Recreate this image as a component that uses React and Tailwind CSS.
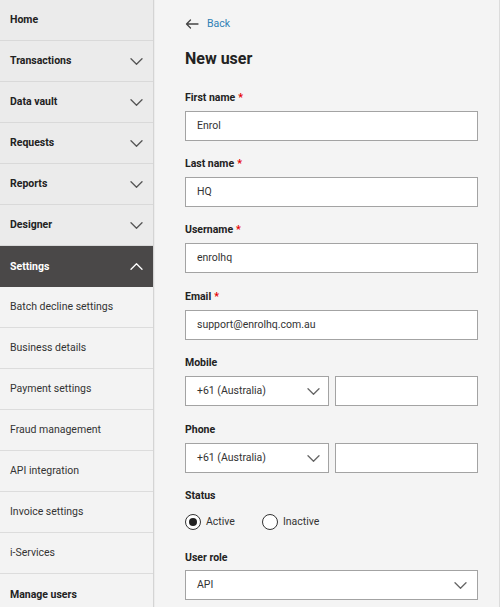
import React from "react";

const Chevron = ({ up = false, color = "#555" }) => (
  <svg width="13" height="7" viewBox="0 0 13 7" fill="none" className="shrink-0">
    <path
      d={up ? "M1 6.3 L6.5 0.8 L12 6.3" : "M1 0.7 L6.5 6.2 L12 0.7"}
      stroke={color}
      strokeWidth="1.3"
      strokeLinecap="round"
      strokeLinejoin="round"
    />
  </svg>
);

const top = [
  { label: "Home" },
  { label: "Transactions", chev: true },
  { label: "Data vault", chev: true },
  { label: "Requests", chev: true },
  { label: "Reports", chev: true },
  { label: "Designer", chev: true },
];

const subs = [
  "Batch decline settings",
  "Business details",
  "Payment settings",
  "Fraud management",
  "API integration",
  "Invoice settings",
  "i-Services",
];

function Field({ label, required, value, mb = "mb-[16px]" }) {
  return (
    <div className={`flex flex-col ${mb}`}>
      <div className="h-[14px] leading-[14px] text-[10.5px] font-bold text-[#222] mb-[6px]">
        {label}
        {required && <span className="text-[#e60000] ml-[3px]">*</span>}
      </div>
      <div className="h-[30px] w-[293px] bg-white border border-[#a3a3a3] flex items-center px-[11px] text-[10.5px] text-[#333]">
        {value}
      </div>
    </div>
  );
}

function PhoneField({ label, mb = "mb-[16px]" }) {
  return (
    <div className={`flex flex-col ${mb}`}>
      <div className="h-[14px] leading-[14px] text-[10.5px] font-bold text-[#222] mb-[6px]">{label}</div>
      <div className="flex gap-[6px] w-[293px]">
        <div className="h-[30px] w-[144px] bg-white border border-[#a3a3a3] flex items-center justify-between pl-[11px] pr-[8px] text-[10.5px] text-[#333]">
          <span>+61 (Australia)</span>
          <Chevron color="#666" />
        </div>
        <div className="h-[30px] flex-1 bg-white border border-[#a3a3a3]" />
      </div>
    </div>
  );
}

function Radio({ checked, label }) {
  return (
    <div className="flex items-center gap-[5px]">
      <div className="w-[16px] h-[16px] rounded-full border border-[#333] bg-white flex items-center justify-center">
        {checked && <div className="w-[8px] h-[8px] rounded-full bg-[#222]" />}
      </div>
      <span className="text-[10.5px] text-[#333]">{label}</span>
    </div>
  );
}

export default function App() {
  return (
    <div
      className="w-[500px] h-[607px] overflow-hidden flex bg-[#f4f4f4]"
      style={{ fontFamily: "Roboto, 'Liberation Sans', Arial, sans-serif" }}
    >
      <aside className="w-[154px] shrink-0 flex flex-col border-r border-[#d4d4d4]">
        {top.map((t) => (
          <div
            key={t.label}
            className="h-[41px] shrink-0 bg-[#ebebeb] border-b border-[#d9d9d9] flex items-center justify-between pl-[10px] pr-[10px]"
          >
            <span className="text-[10.5px] font-bold text-[#222]">{t.label}</span>
            {t.chev && <Chevron />}
          </div>
        ))}
        <div className="h-[41px] shrink-0 bg-[#4a4848] flex items-center justify-between pl-[10px] pr-[10px]">
          <span className="text-[10.5px] font-bold text-white">Settings</span>
          <Chevron up color="#fff" />
        </div>
        {subs.map((s) => (
          <div
            key={s}
            className="h-[41px] shrink-0 bg-[#f3f3f3] border-b border-[#dcdcdc] flex items-center pl-[10px]"
          >
            <span className="text-[10.5px] text-[#333]">{s}</span>
          </div>
        ))}
        <div className="h-[41px] shrink-0 bg-[#f3f3f3] flex items-center pl-[10px]">
          <span className="text-[10.5px] font-bold text-[#222]">Manage users</span>
        </div>
      </aside>
      <main className="flex-1 flex flex-col pl-[30px] pt-[16px] border-l border-[#ececec] border-r border-r-[#dcdcdc]">
        <div className="h-[16px] flex items-center gap-[8px]">
          <svg width="14" height="10" viewBox="0 0 14 10" fill="none">
            <path d="M13 5 H1.5 M5.5 1 L1.5 5 L5.5 9" stroke="#444" strokeWidth="1.3" strokeLinecap="round" strokeLinejoin="round" />
          </svg>
          <span className="text-[10.5px] text-[#2f7fb5]">Back</span>
        </div>
        <h1 className="mt-[17px] h-[20px] leading-[20px] text-[16px] font-bold text-[#222]">New user</h1>
        <div className="mt-[22px] flex flex-col">
          <Field label="First name" required value="Enrol" />
          <Field label="Last name" required value="HQ" />
          <Field label="Username" required value="enrolhq" mb="mb-[17px]" />
          <Field label="Email" required value="support@enrolhq.com.au" />
          <PhoneField label="Mobile" mb="mb-[17px]" />
          <PhoneField label="Phone" />
          <div className="flex flex-col">
            <div className="h-[14px] leading-[14px] text-[10.5px] font-bold text-[#222]">Status</div>
            <div className="flex gap-[27px] mt-[11px]">
              <Radio checked label="Active" />
              <Radio label="Inactive" />
            </div>
          </div>
          <div className="flex flex-col mt-[21px]">
            <div className="h-[14px] leading-[14px] text-[10.5px] font-bold text-[#222] mb-[5px]">User role</div>
            <div className="h-[30px] w-[293px] bg-white border border-[#a3a3a3] flex items-center justify-between pl-[11px] pr-[10px] text-[10.5px] text-[#333]">
              <span>API</span>
              <Chevron color="#666" />
            </div>
          </div>
        </div>
      </main>
    </div>
  );
}
